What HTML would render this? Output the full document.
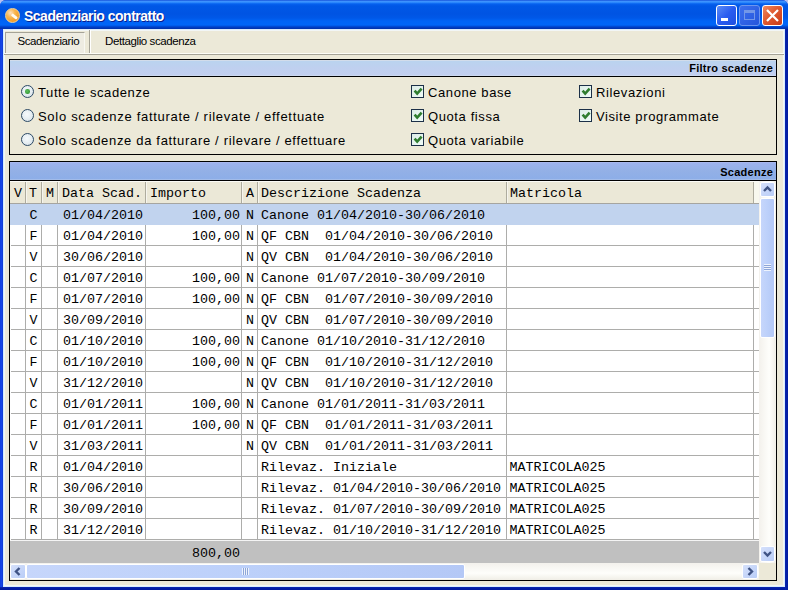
<!DOCTYPE html>
<html><head><meta charset="utf-8">
<style>
*{box-sizing:border-box;margin:0;padding:0}
html,body{width:788px;height:590px;overflow:hidden;background:#b8c0f0}
body{position:relative;font-family:"Liberation Sans",sans-serif;font-size:13px;color:#000}
.a{position:absolute}
#frame{left:0;top:0;width:788px;height:590px;background:linear-gradient(90deg,#1040e0 0,#1848e8 2px,#0a32c8 3px,#0734d4 4px,#0734d4 784px,#0a2cb8 785px,#0626b0 788px);border-radius:6px 6px 0 0}
#title{left:0;top:0;width:788px;height:29px;border-radius:6px 6px 0 0;
 background:linear-gradient(#0a3fd0 0px,#3d8ffc 1px,#3d95ff 2px,#1a78f8 3px,#0660ee 4px,#0057e6 6px,#0054e3 14px,#0058e8 18px,#0064f6 21px,#0066f8 25px,#0054e0 26px,#0040c8 27px,#0030a8 29px)}
#ttext{left:24px;top:8px;font-weight:bold;font-size:14px;letter-spacing:-0.5px;color:#fff;text-shadow:1px 1px 0 #0a1e8c;white-space:nowrap}
#client{left:3px;top:29px;width:782px;height:558px;background:#f2f6f6;border-top:1px solid #dcecfb;border-left:1px solid #d4ecfc;border-right:1px solid #d8ecfc;border-bottom:1px solid #d8ecfc}
#beige{left:5px;top:31px;width:778px;height:554px;background:#ece9d8}
.panel{position:absolute;border:1px solid #000;background:#ece9d8}
.phdr{position:absolute;left:0;top:0;right:0;border-bottom:1px solid #000;font-weight:bold;font-size:11px;text-align:right;padding-right:3px;letter-spacing:0.25px}
.lbl{position:absolute;font-size:13px;letter-spacing:0.6px;white-space:nowrap;line-height:15px}
.radio{position:absolute;width:13px;height:13px;border-radius:50%;border:1.4px solid #2c4a66;background:radial-gradient(circle at 45% 40%,#f6fafc 0,#e6eef2 50%,#d0dae0 100%)}
.radio.on::after{content:"";position:absolute;left:3.3px;top:3.3px;width:4.6px;height:4.6px;border-radius:50%;background:radial-gradient(circle at 40% 40%,#5cc05c,#2a8a2a)}
.chk{position:absolute;width:13px;height:13px;border:1px solid #1c3048;background:linear-gradient(135deg,#dcece6,#f0fcf8)}
.chk svg{position:absolute;left:0;top:0}
.mono{font-family:"Liberation Mono",monospace;font-size:13.33px}
</style><style>
.t{font-family:"Liberation Mono",monospace;font-size:13.33px;line-height:15px;white-space:nowrap}
.sbtn{border:1px solid #fff;border-radius:2px;background:linear-gradient(135deg,#d5e0fb,#b9cdf7)}
.sthumb{border:1px solid #fff;border-radius:2px;background:linear-gradient(90deg,#c6d6fb,#bcd0fa 50%,#b4c8f6)}
</style></head><body>
<div id="frame" class="a"></div>
<div class="a" style="left:0;top:587px;width:788px;height:3px;background:linear-gradient(#0c2ab8,#041ea4 1px,#001aa0)"></div>
<div class="a" style="left:785px;top:20px;width:3px;height:570px;background:linear-gradient(90deg,#0a28b4,#0420a8 1px,#001ca0)"></div>
<div id="title" class="a"></div>
<!-- icon -->
<div class="a" style="left:5px;top:7.5px;width:15px;height:15px;border-radius:50%;border:1px solid #f6d59a;background:radial-gradient(circle at 35% 30%,#fde0c0 0,#f9b650 35%,#f29a25 75%,#e88a20 100%)"></div>
<div class="a" style="left:10.5px;top:15px;width:7px;height:2.6px;background:#fffaf0;border-radius:1.3px;transform:rotate(38deg)"></div>
<div id="ttext" class="a">Scadenziario contratto</div>
<!-- window buttons -->
<div class="a" style="left:716px;top:5px;width:21px;height:21px;border:1px solid #fff;border-radius:3px;background:linear-gradient(135deg,#5b8cf6 0%,#2a5cf0 50%,#1f4fe0 100%)"></div>
<div class="a" style="left:721px;top:18px;width:7px;height:3px;background:#fff"></div>
<div class="a" style="left:739px;top:5px;width:21px;height:21px;border:1px solid #6d95ee;border-radius:3px;background:linear-gradient(135deg,#3d6fee,#2456dc)"></div>
<div class="a" style="left:744px;top:10px;width:11px;height:10px;border:1px solid #7397e8;border-top-width:3px"></div>
<div class="a" style="left:762px;top:5px;width:21px;height:21px;border:1px solid #fff;border-radius:3px;background:linear-gradient(135deg,#f08a60 0%,#e05a30 45%,#c83a18 100%)"></div>
<svg class="a" style="left:762px;top:5px" width="21" height="21"><path d="M5 5 L16 16 M16 5 L5 16" stroke="#fff" stroke-width="2.2"/></svg>

<div id="client" class="a"></div>
<div id="beige" class="a"></div>

<!-- tabs -->
<div class="a" style="left:5px;top:32px;width:80px;height:21px;border-top:1px solid #a5a397;border-left:1px solid #a5a397;border-right:1px solid #f8f8f2;background:#eeece2"></div>
<div class="a" style="left:17.5px;top:34.6px;font-size:11.5px;letter-spacing:-0.4px;line-height:13px">Scadenziario</div>
<div class="a" style="left:89px;top:30px;width:1px;height:23px;background:#a5a397"></div>
<div class="a" style="left:90px;top:30px;width:1px;height:23px;background:#fff"></div>
<div class="a" style="left:105px;top:34.6px;font-size:11.5px;letter-spacing:-0.4px;line-height:13px">Dettaglio scadenza</div>
<div class="a" style="left:4px;top:53px;width:780px;height:1px;background:#fcfcf6"></div>
<div class="a" style="left:4px;top:54px;width:780px;height:1px;background:#a5a397"></div>

<!-- filtro panel -->
<div class="panel" style="left:9px;top:59px;width:768px;height:96px">
  <div class="phdr" style="height:17px;background:linear-gradient(#d2dcea 0,#d2dcea 1px,#bad3ef 1px,#bfd0ef 8px,#c2cff0 15px,#cbd8f0 15px);line-height:16px">Filtro scadenze</div>
</div>
<div class="radio on" style="left:21px;top:85px"></div>
<div class="lbl" style="left:38px;top:85px">Tutte le scadenze</div>
<div class="radio" style="left:21px;top:109px"></div>
<div class="lbl" style="left:38px;top:109px;letter-spacing:0.7px">Solo scadenze fatturate / rilevate / effettuate</div>
<div class="radio" style="left:21px;top:133px"></div>
<div class="lbl" style="left:38px;top:133px;letter-spacing:0.67px">Solo scadenze da fatturare / rilevare / effettuare</div>

<div class="chk" style="left:411px;top:85px"><svg width="11" height="11"><path d="M2.6 4.6 L5.2 7.6 L9.6 2.6" stroke="#2f7d2f" stroke-width="2.6" fill="none"/></svg></div>
<div class="lbl" style="left:428px;top:85px">Canone base</div>
<div class="chk" style="left:411px;top:109px"><svg width="11" height="11"><path d="M2.6 4.6 L5.2 7.6 L9.6 2.6" stroke="#2f7d2f" stroke-width="2.6" fill="none"/></svg></div>
<div class="lbl" style="left:428px;top:109px">Quota fissa</div>
<div class="chk" style="left:411px;top:133px"><svg width="11" height="11"><path d="M2.6 4.6 L5.2 7.6 L9.6 2.6" stroke="#2f7d2f" stroke-width="2.6" fill="none"/></svg></div>
<div class="lbl" style="left:428px;top:133px">Quota variabile</div>
<div class="chk" style="left:579px;top:85px"><svg width="11" height="11"><path d="M2.6 4.6 L5.2 7.6 L9.6 2.6" stroke="#2f7d2f" stroke-width="2.6" fill="none"/></svg></div>
<div class="lbl" style="left:596px;top:85px">Rilevazioni</div>
<div class="chk" style="left:579px;top:109px"><svg width="11" height="11"><path d="M2.6 4.6 L5.2 7.6 L9.6 2.6" stroke="#2f7d2f" stroke-width="2.6" fill="none"/></svg></div>
<div class="lbl" style="left:596px;top:109px">Visite programmate</div>

<!-- scadenze panel -->
<div class="panel" style="left:9px;top:161px;width:768px;height:420px;background:#fff">
  <div class="phdr" style="height:19px;background:linear-gradient(#a9b7ef 0,#a9b7ef 1px,#9db2ee 1px,#93b0e6 9px,#8daee8 17px,#a2bbe8 17px);line-height:20px">Scadenze</div>
</div>
<div class="a" style="left:10px;top:181px;width:749px;height:22px;background:#ebe8d7"></div>
<div class="a" style="left:10px;top:203px;width:749px;height:1px;background:#a6a5a0"></div>
<div class="a" style="left:10px;top:181px;width:749px;height:1px;background:#fbfbf6"></div>
<div class="a" style="left:25px;top:182px;width:1px;height:21px;background:#aeac9e"></div>
<div class="a" style="left:26px;top:182px;width:1px;height:21px;background:#f6f5ee"></div>
<div class="a" style="left:41px;top:182px;width:1px;height:21px;background:#aeac9e"></div>
<div class="a" style="left:42px;top:182px;width:1px;height:21px;background:#f6f5ee"></div>
<div class="a" style="left:57px;top:182px;width:1px;height:21px;background:#aeac9e"></div>
<div class="a" style="left:58px;top:182px;width:1px;height:21px;background:#f6f5ee"></div>
<div class="a" style="left:145px;top:182px;width:1px;height:21px;background:#aeac9e"></div>
<div class="a" style="left:146px;top:182px;width:1px;height:21px;background:#f6f5ee"></div>
<div class="a" style="left:241px;top:182px;width:1px;height:21px;background:#aeac9e"></div>
<div class="a" style="left:242px;top:182px;width:1px;height:21px;background:#f6f5ee"></div>
<div class="a" style="left:257px;top:182px;width:1px;height:21px;background:#aeac9e"></div>
<div class="a" style="left:258px;top:182px;width:1px;height:21px;background:#f6f5ee"></div>
<div class="a" style="left:506px;top:182px;width:1px;height:21px;background:#aeac9e"></div>
<div class="a" style="left:507px;top:182px;width:1px;height:21px;background:#f6f5ee"></div>
<div class="a" style="left:753px;top:182px;width:1px;height:21px;background:#aeac9e"></div>
<div class="a" style="left:754px;top:182px;width:1px;height:21px;background:#f6f5ee"></div>
<div class="a" style="left:754px;top:182px;width:5px;height:21px;background:#f8f8ee"></div>
<div class="a t" style="left:14px;top:186px;">V</div>
<div class="a t" style="left:29px;top:186px;">T</div>
<div class="a t" style="left:46px;top:186px;">M</div>
<div class="a t" style="left:62px;top:186px;">Data&nbsp;Scad.</div>
<div class="a t" style="left:150px;top:186px;">Importo</div>
<div class="a t" style="left:246px;top:186px;">A</div>
<div class="a t" style="left:261px;top:186px;">Descrizione&nbsp;Scadenza</div>
<div class="a t" style="left:510px;top:186px;">Matricola</div>
<div class="a" style="left:10px;top:204px;width:749px;height:21px;background:#c1d3ee"></div>
<div class="a" style="left:11px;top:224px;width:748px;height:1px;background:#adadab"></div>
<div class="a" style="left:11px;top:245px;width:748px;height:1px;background:#adadab"></div>
<div class="a" style="left:11px;top:266px;width:748px;height:1px;background:#adadab"></div>
<div class="a" style="left:11px;top:287px;width:748px;height:1px;background:#adadab"></div>
<div class="a" style="left:11px;top:308px;width:748px;height:1px;background:#adadab"></div>
<div class="a" style="left:11px;top:329px;width:748px;height:1px;background:#adadab"></div>
<div class="a" style="left:11px;top:350px;width:748px;height:1px;background:#adadab"></div>
<div class="a" style="left:11px;top:371px;width:748px;height:1px;background:#adadab"></div>
<div class="a" style="left:11px;top:392px;width:748px;height:1px;background:#adadab"></div>
<div class="a" style="left:11px;top:413px;width:748px;height:1px;background:#adadab"></div>
<div class="a" style="left:11px;top:434px;width:748px;height:1px;background:#adadab"></div>
<div class="a" style="left:11px;top:455px;width:748px;height:1px;background:#adadab"></div>
<div class="a" style="left:11px;top:476px;width:748px;height:1px;background:#adadab"></div>
<div class="a" style="left:11px;top:497px;width:748px;height:1px;background:#adadab"></div>
<div class="a" style="left:11px;top:518px;width:748px;height:1px;background:#adadab"></div>
<div class="a" style="left:11px;top:539px;width:748px;height:1px;background:#adadab"></div>
<div class="a" style="left:25px;top:225px;width:1px;height:315px;background:#adadab"></div>
<div class="a" style="left:41px;top:225px;width:1px;height:315px;background:#adadab"></div>
<div class="a" style="left:57px;top:225px;width:1px;height:315px;background:#adadab"></div>
<div class="a" style="left:145px;top:225px;width:1px;height:315px;background:#adadab"></div>
<div class="a" style="left:241px;top:225px;width:1px;height:315px;background:#adadab"></div>
<div class="a" style="left:257px;top:225px;width:1px;height:315px;background:#adadab"></div>
<div class="a" style="left:506px;top:225px;width:1px;height:315px;background:#adadab"></div>
<div class="a" style="left:753px;top:225px;width:1px;height:315px;background:#adadab"></div>
<div class="a" style="left:10px;top:204px;width:749px;height:21px;background:#c1d3ee"></div>
<div class="a t" style="left:29.5px;top:208px;">C</div>
<div class="a t" style="left:63px;top:208px;">01/04/2010</div>
<div class="a t" style="left:192px;top:208px;">100,00</div>
<div class="a t" style="left:246px;top:208px;">N</div>
<div class="a t" style="left:261px;top:208px;">Canone&nbsp;01/04/2010-30/06/2010</div>
<div class="a t" style="left:29.5px;top:229px;">F</div>
<div class="a t" style="left:63px;top:229px;">01/04/2010</div>
<div class="a t" style="left:192px;top:229px;">100,00</div>
<div class="a t" style="left:246px;top:229px;">N</div>
<div class="a t" style="left:261px;top:229px;">QF&nbsp;CBN&nbsp;&nbsp;01/04/2010-30/06/2010</div>
<div class="a t" style="left:29.5px;top:250px;">V</div>
<div class="a t" style="left:63px;top:250px;">30/06/2010</div>
<div class="a t" style="left:246px;top:250px;">N</div>
<div class="a t" style="left:261px;top:250px;">QV&nbsp;CBN&nbsp;&nbsp;01/04/2010-30/06/2010</div>
<div class="a t" style="left:29.5px;top:271px;">C</div>
<div class="a t" style="left:63px;top:271px;">01/07/2010</div>
<div class="a t" style="left:192px;top:271px;">100,00</div>
<div class="a t" style="left:246px;top:271px;">N</div>
<div class="a t" style="left:261px;top:271px;">Canone&nbsp;01/07/2010-30/09/2010</div>
<div class="a t" style="left:29.5px;top:292px;">F</div>
<div class="a t" style="left:63px;top:292px;">01/07/2010</div>
<div class="a t" style="left:192px;top:292px;">100,00</div>
<div class="a t" style="left:246px;top:292px;">N</div>
<div class="a t" style="left:261px;top:292px;">QF&nbsp;CBN&nbsp;&nbsp;01/07/2010-30/09/2010</div>
<div class="a t" style="left:29.5px;top:313px;">V</div>
<div class="a t" style="left:63px;top:313px;">30/09/2010</div>
<div class="a t" style="left:246px;top:313px;">N</div>
<div class="a t" style="left:261px;top:313px;">QV&nbsp;CBN&nbsp;&nbsp;01/07/2010-30/09/2010</div>
<div class="a t" style="left:29.5px;top:334px;">C</div>
<div class="a t" style="left:63px;top:334px;">01/10/2010</div>
<div class="a t" style="left:192px;top:334px;">100,00</div>
<div class="a t" style="left:246px;top:334px;">N</div>
<div class="a t" style="left:261px;top:334px;">Canone&nbsp;01/10/2010-31/12/2010</div>
<div class="a t" style="left:29.5px;top:355px;">F</div>
<div class="a t" style="left:63px;top:355px;">01/10/2010</div>
<div class="a t" style="left:192px;top:355px;">100,00</div>
<div class="a t" style="left:246px;top:355px;">N</div>
<div class="a t" style="left:261px;top:355px;">QF&nbsp;CBN&nbsp;&nbsp;01/10/2010-31/12/2010</div>
<div class="a t" style="left:29.5px;top:376px;">V</div>
<div class="a t" style="left:63px;top:376px;">31/12/2010</div>
<div class="a t" style="left:246px;top:376px;">N</div>
<div class="a t" style="left:261px;top:376px;">QV&nbsp;CBN&nbsp;&nbsp;01/10/2010-31/12/2010</div>
<div class="a t" style="left:29.5px;top:397px;">C</div>
<div class="a t" style="left:63px;top:397px;">01/01/2011</div>
<div class="a t" style="left:192px;top:397px;">100,00</div>
<div class="a t" style="left:246px;top:397px;">N</div>
<div class="a t" style="left:261px;top:397px;">Canone&nbsp;01/01/2011-31/03/2011</div>
<div class="a t" style="left:29.5px;top:418px;">F</div>
<div class="a t" style="left:63px;top:418px;">01/01/2011</div>
<div class="a t" style="left:192px;top:418px;">100,00</div>
<div class="a t" style="left:246px;top:418px;">N</div>
<div class="a t" style="left:261px;top:418px;">QF&nbsp;CBN&nbsp;&nbsp;01/01/2011-31/03/2011</div>
<div class="a t" style="left:29.5px;top:439px;">V</div>
<div class="a t" style="left:63px;top:439px;">31/03/2011</div>
<div class="a t" style="left:246px;top:439px;">N</div>
<div class="a t" style="left:261px;top:439px;">QV&nbsp;CBN&nbsp;&nbsp;01/01/2011-31/03/2011</div>
<div class="a t" style="left:29.5px;top:460px;">R</div>
<div class="a t" style="left:63px;top:460px;">01/04/2010</div>
<div class="a t" style="left:261px;top:460px;">Rilevaz.&nbsp;Iniziale</div>
<div class="a t" style="left:509.5px;top:460px;">MATRICOLA025</div>
<div class="a t" style="left:29.5px;top:481px;">R</div>
<div class="a t" style="left:63px;top:481px;">30/06/2010</div>
<div class="a t" style="left:261px;top:481px;">Rilevaz.&nbsp;01/04/2010-30/06/2010</div>
<div class="a t" style="left:509.5px;top:481px;">MATRICOLA025</div>
<div class="a t" style="left:29.5px;top:502px;">R</div>
<div class="a t" style="left:63px;top:502px;">30/09/2010</div>
<div class="a t" style="left:261px;top:502px;">Rilevaz.&nbsp;01/07/2010-30/09/2010</div>
<div class="a t" style="left:509.5px;top:502px;">MATRICOLA025</div>
<div class="a t" style="left:29.5px;top:523px;">R</div>
<div class="a t" style="left:63px;top:523px;">31/12/2010</div>
<div class="a t" style="left:261px;top:523px;">Rilevaz.&nbsp;01/10/2010-31/12/2010</div>
<div class="a t" style="left:509.5px;top:523px;">MATRICOLA025</div>
<div class="a" style="left:10px;top:540px;width:749px;height:23px;background:#c0c0c0;border-top:1px solid #f4f4f4"></div>
<div class="a t" style="left:192px;top:546px;">800,00</div>
<div class="a" style="left:759px;top:181px;width:17px;height:382px;background:linear-gradient(90deg,#f3f1ec,#fefefb 60%,#f0eee6)"></div>
<div class="a sbtn" style="left:760px;top:182px;width:15px;height:15px"></div>
<svg class="a" style="left:760px;top:182px" width="15" height="15"><path d="M4 9 L7.5 5.5 L11 9" stroke="#3f5384" stroke-width="2.4" fill="none"/></svg>
<div class="a sthumb" style="left:760px;top:198px;width:15px;height:140px"></div>
<div class="a" style="left:764px;top:264px;width:7px;height:7px;background:repeating-linear-gradient(#eef3fd 0 1px,#8ea6d8 1px 2px)"></div>
<div class="a sbtn" style="left:760px;top:546px;width:15px;height:16px"></div>
<svg class="a" style="left:760px;top:546px" width="15" height="16"><path d="M4 6 L7.5 9.5 L11 6" stroke="#3f5384" stroke-width="2.4" fill="none"/></svg>
<div class="a" style="left:10px;top:563px;width:749px;height:17px;background:linear-gradient(#f3f1ec,#fefefb 60%,#f0eee6)"></div>
<div class="a sbtn" style="left:10px;top:564px;width:16px;height:15px"></div>
<svg class="a" style="left:10px;top:564px" width="16" height="15"><path d="M9.5 4 L6 7.5 L9.5 11" stroke="#3f5384" stroke-width="2.4" fill="none"/></svg>
<div class="a sthumb" style="left:26px;top:564px;width:439px;height:15px"></div>
<div class="a" style="left:242px;top:568px;width:7px;height:7px;background:repeating-linear-gradient(90deg,#eef3fd 0 1px,#8ea6d8 1px 2px)"></div>
<div class="a sbtn" style="left:742px;top:564px;width:16px;height:15px"></div>
<svg class="a" style="left:742px;top:564px" width="16" height="15"><path d="M6.5 4 L10 7.5 L6.5 11" stroke="#3f5384" stroke-width="2.4" fill="none"/></svg>
<div class="a" style="left:759px;top:563px;width:17px;height:17px;background:#ece9d8"></div>
</body></html>
